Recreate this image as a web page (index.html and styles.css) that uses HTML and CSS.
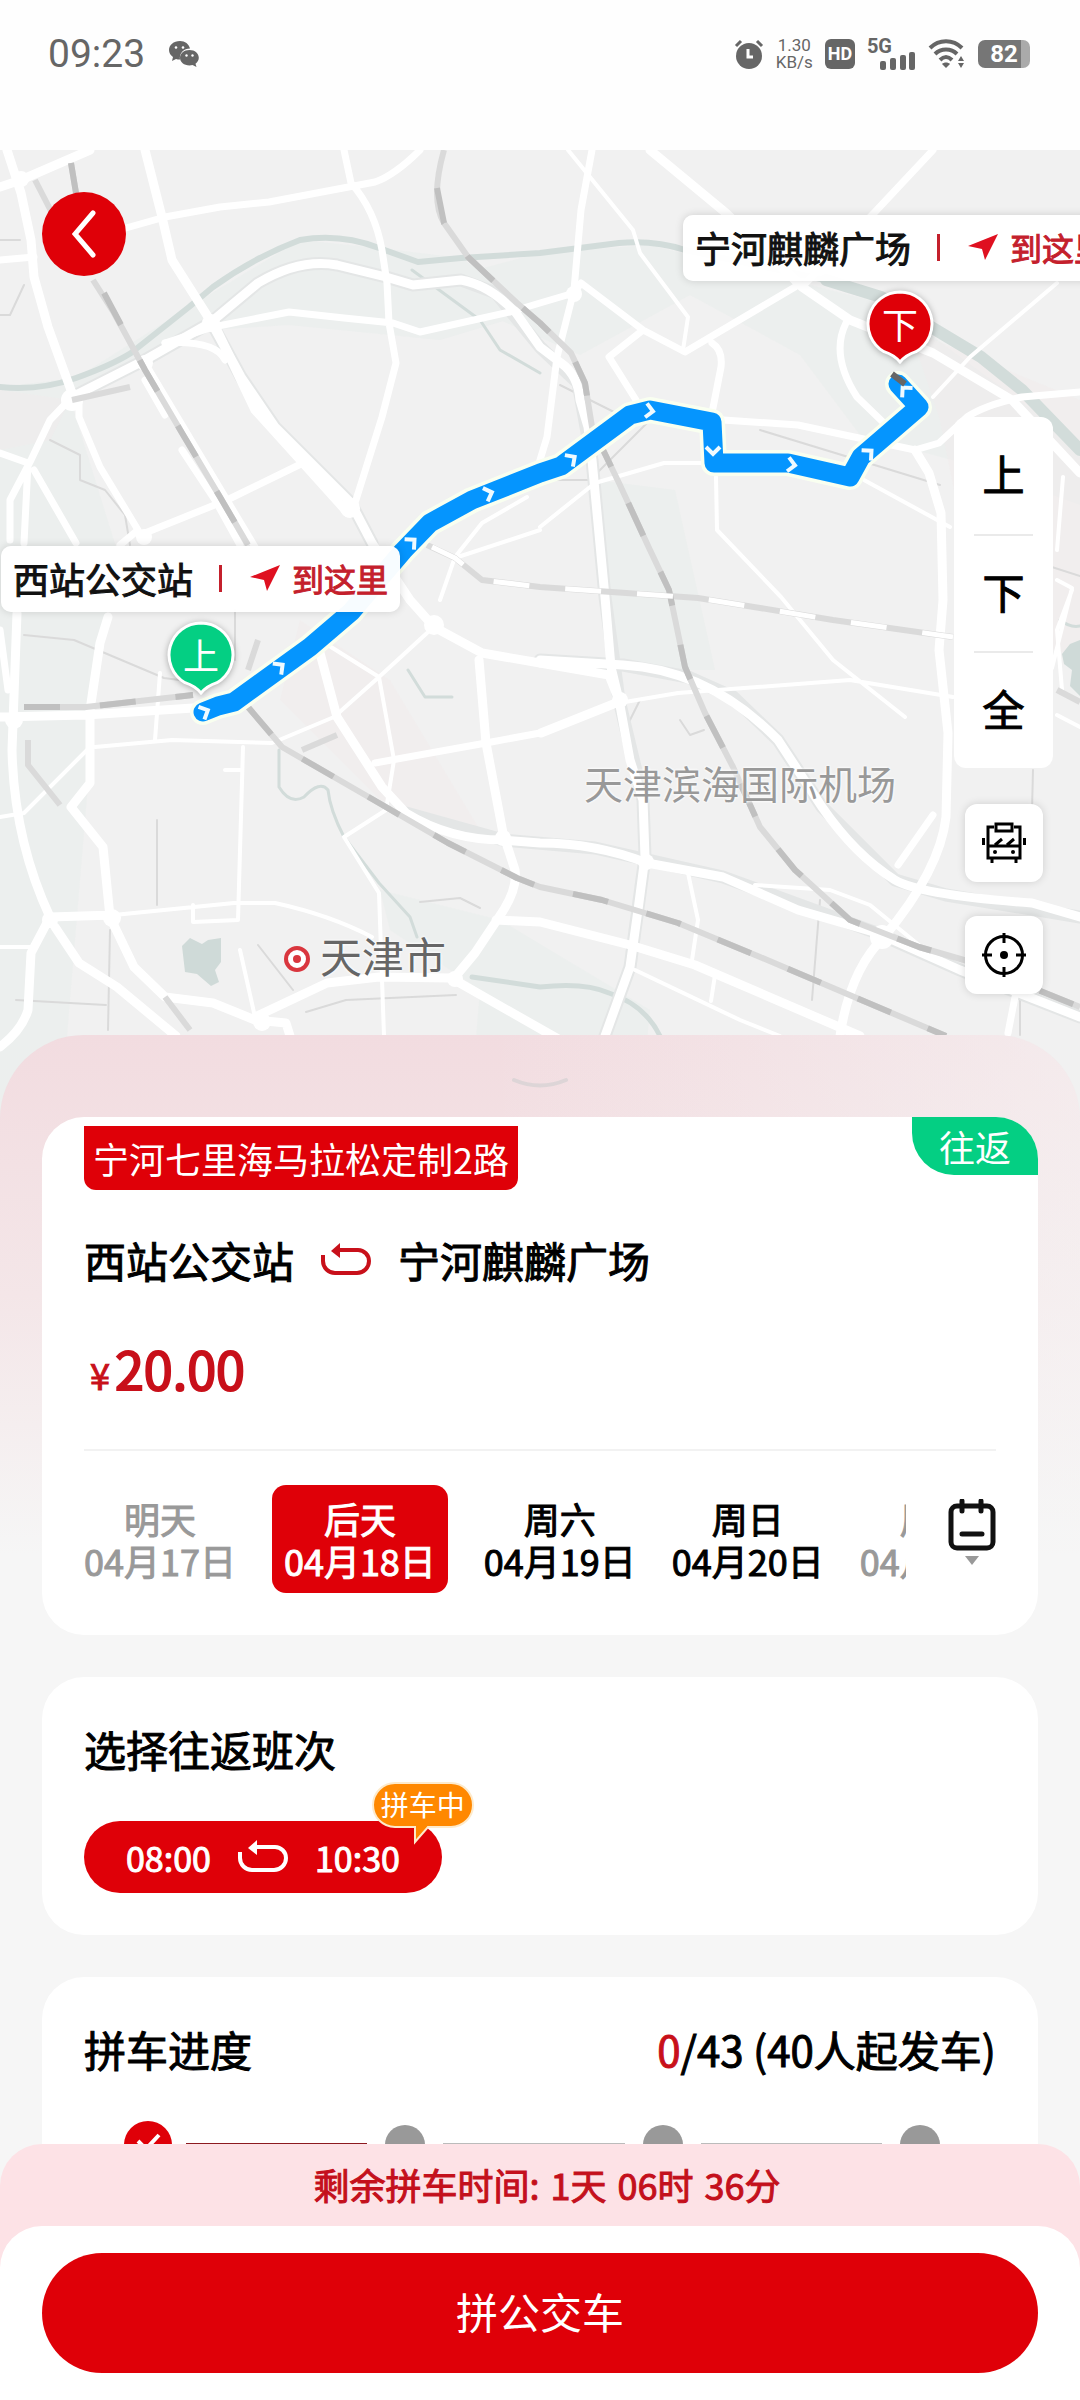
FILE: index.html
```html
<!DOCTYPE html>
<html lang="zh-CN">
<head>
<meta charset="utf-8">
<meta name="viewport" content="width=device-width, initial-scale=1">
<title>宁河七里海马拉松定制2路</title>
<link rel="stylesheet" href="styles.css">
</head>
<body>
<svg class="defs" width="0" height="0" aria-hidden="true">
  <symbol id="loop" viewBox="0 0 52 34">
    <path d="M3 12v6a12 12 0 0 0 12 12h22a12 12 0 0 0 12-12v0a11 11 0 0 0-11-11H18" fill="none" stroke="currentColor" stroke-width="4"/>
    <path d="M11 8L20 0v15z" fill="currentColor"/>
  </symbol>
  <symbol id="nav" viewBox="0 0 30 26">
    <path d="M0 12L30 0 17 26 14 15z" fill="currentColor"/>
  </symbol>
</svg>
<div class="app">
  <header class="status">
    <div class="status-side">
      <time class="clock">09:23</time>
      <svg width="30" height="26" viewBox="0 0 30 26" fill="#666">
        <path d="M11 0C4.500 0 0 4 0 9c0 3 1.500 5 4 7l-1 4 4-2c1 .4 2.500.6 4 .6C10 12 15 7.500 21 7.500 20 3 16 0 11 0z"/>
        <path d="M20.500 9C15 9 11 12.500 11 16.800s4 7.700 9.500 7.700c1 0 2-.1 3-.4l4 1.900-1-3.200c2-1.500 3.300-3.600 3.300-6C29.800 12.500 26 9 20.500 9z"/>
        <g fill="#fff"><circle cx="7" cy="6.500" r="1.300"/><circle cx="14" cy="6.500" r="1.300"/><circle cx="17.500" cy="14.500" r="1.200"/><circle cx="23.500" cy="14.500" r="1.200"/></g>
      </svg>
    </div>
    <div class="status-side status-right">
      <svg width="30" height="30" viewBox="0 0 30 30">
        <circle cx="15" cy="17" r="13" fill="#666"/>
        <path d="M2 7l5-5M28 7l-5-5" stroke="#666" stroke-width="3"/>
        <path d="M14 10v8h5" fill="none" stroke="#fff" stroke-width="3"/>
      </svg>
      <span class="rate">1.30<br>KB/s</span>
      <span class="hd">HD</span>
      <span class="signal"><b>5G</b>
        <svg width="36" height="18" viewBox="0 0 36 18" fill="#666"><rect y="9" width="6" height="9" rx="2"/><rect x="10" y="6" width="6" height="12" rx="2"/><rect x="20" y="3" width="6" height="15" rx="2"/><rect x="29" width="6" height="18" rx="2"/></svg>
      </span>
      <svg width="38" height="30" viewBox="0 0 38 30" fill="none" stroke="#666" stroke-width="4">
        <path d="M2 9C11 0 25 0 34 9M7 15c6-6 16-6 22 0M12 21c4-4 8-4 12 0"/>
        <path d="M18 29l-4-4c2-2 6-2 8 0zM33 17l3 5h-6zM33 29l3-5h-6z" fill="#666" stroke="none"/>
      </svg>
      <span class="battery">82</span>
    </div>
  </header>

  <main class="content">
    <section class="map" aria-label="线路地图">
      <svg class="map-art" viewBox="0 150 1080 970" preserveAspectRatio="xMidYMin slice" fill="none" stroke-linejoin="round" stroke-linecap="round">
        <rect y="150" width="1080" height="970" fill="#f1f1f1"/>
        <path d="M0 387L76 378 189 307 300 240 379 248 461 258 540 310 440 340 289 325 210 330 145 365 72 405 120 560 100 640 60 1120H0zM540 253l110-8 240 60 190 140v60l-110-40-110-30-60-80-110-60-110 60-160-70zM595 480l80 10 40 180-100 0zM380 890l120 30 150 90-10 100H470l10-120-90-60z" fill="#eaeeed" fill-opacity=".7"/>
        <path d="M910 330l170 70v260l-100-40-40-200zM0 390l70 10-20 40-50 10zM300 620l90 60 90 150-100-30-100-100z" fill="#f2ebeb" fill-opacity=".45"/>
        <!-- rivers -->
        <g stroke="#d2dcda">
          <path stroke-width="6" d="M0 387Q40 391 76 378T131 353L189 307 213 287Q255 257 300 240 340 233 379 248L418 262 461 258 540 253 619 243Q655 240 685 250L826 280"/>
          <path stroke-width="12" d="M826 280L881 297 936 330 981 357 1022 390 1080 450"/>
          <path stroke-width="3" d="M279 750V787Q290 805 304 797 320 780 328 790 330 810 344 837L379 883 410 917 417 937M412 270L480 320 500 350 540 373"/>
          <path stroke-width="5" d="M472 977L540 987Q585 982 609 993 645 1005 660 1036"/>
          <path stroke-width="3" d="M408 670L425 697 452 697M1060 620q10 8 20 6"/>
        </g>
        <path d="M182 946l8-8 12 6 6-4 13-2v24l-6 8 4 12-8 4-14-12-12-2zM1062 654l8-10 10-4v56l-10-10 2-16-8-6z" fill="#cfdad8"/>
        <!-- small lanes -->
        <g stroke="#dadada" stroke-width="2">
          <path d="M24 285l-14 30-10 0M50 440l30 15v25l25 10 20 25 5 30M24 635l50 5 90 38 30 4M157 820v85M110 930l-2 100M16 1000l90 5M420 902l40-4 20 10M306 1012l40-12 110-5M258 945l35 45M560 385l60 30M760 430l180 55M820 900l-8 100M1033 770l-2 80M235 610v50M640 700l-15 30M680 720l10 15 14-5M1030 560l50 16M0 240h20M1020 950v85"/>
          <path d="M540 480l50 0 60-60M1012 640l-30 8"/>
        </g>
        <!-- soft edge under the main roads -->
        <g stroke="#e4e6e6" stroke-width="13">
          <path d="M210 320L241 377 275 427 351 503 372 543M72 397L145 360 210 323 258 283Q300 258 337 265L386 277 413 285 461 280 496 293 540 347 578 383 592 460 605 597 619 700 643 800 645 857 630 967 605 1036M406 813L503 840 595 848 723 877 877 933 960 970 1080 1017M540 660L623 665 688 677 733 697 778 740 822 807 895 880 946 895 1080 917"/>
        </g>
        <g stroke="#fff" stroke-width="9">
          <path d="M0 187L21 180 90 150M7 150L21 193 31 240 34 277 48 327 72 393M145 150L162 217 172 260 210 320 241 377 275 427 351 503 372 543 410 600 434 627 482 653 540 663"/>
          <path d="M217 330L255 410 303 463 348 513M72 397L145 360 210 323 258 283Q300 258 337 265L386 277 413 285 461 280Q490 285 516 313L540 347 561 363Q578 375 580 400L588 427 592 460 605 597 611 667 619 700 630 760 643 800 645 857 638 910 630 967 605 1036"/>
          <path d="M0 717L86 715 193 708M17 613L12 750Q14 840 50 917L31 953 28 1010Q22 1030 0 1047M108 617L100 643 90 710V783L71 807 103 847 110 917 134 967 165 997 213 1003 255 1020 286 1023 290 1036M50 917L114 915M55 927L79 963 117 987 176 1036"/>
          <path d="M255 1017L327 983 379 977 451 978 560 1040M455 977L475 953 499 917Q518 890 515 870L503 833 486 743 479 660M496 920L540 922 630 945 695 965 860 1036"/>
          <path d="M320 653L337 717 382 787 406 813Q450 840 503 840L540 843Q595 843 647 863L723 877 798 910 877 933 960 970 1080 1017M540 660L623 665Q710 670 778 740L822 807Q855 855 895 880 920 895 1032 903L1080 917M540 663L609 675 619 700"/>
          <path d="M915 450L929 473 941 513 943 600 939 650 948 733 946 817Q940 870 884 937 850 970 840 1036M541 733L616 703M650 150L726 213 802 287 850 320 933 353 1012 400 1080 473"/>
        </g>
        <g stroke="#fff" stroke-width="7">
          <path d="M126 228L165 217 220 207 269 202 375 182Q395 175 420 150M344 150L351 183Q375 210 382 250L387 283 389 323 396 363 382 417 355 503M165 343L213 327 289 312 344 318 393 323 420 332 510 312 540 303 574 293M592 150L581 210 574 290 557 357 547 437 540 460"/>
          <path d="M574 293L581 283 643 330 685 352 795 287M933 150L874 213 802 287M846 323Q830 355 857 397L888 427M712 343Q723 350 721 367L712 413M643 330L609 357 636 400M723 420L798 425 915 450 939 443 967 417Q985 405 1022 397L1080 392"/>
          <path d="M79 397L79 417 100 467 138 530 120 545M145 533L227 500 303 463M145 363L203 460 255 547M72 397L50 420 31 460 10 500V540M0 453L28 463 24 543M34 470L76 543M0 260L34 257M165 343Q215 340 225 360M0 630L8 690M375 763L486 743 540 733"/>
          <path d="M145 380L165 415M182 450L215 500 240 545M898 865l35-50M1015 997l-7 36"/>
        </g>
        <g stroke="#fff" stroke-width="4">
          <path d="M568 150L633 230 640 253 688 317 683 350M540 527L595 483 664 463 705 463M716 477L717 530 781 597 833 660 905 717M864 480L950 527M1057 283L970 357 933 397M619 703L678 693 850 680 953 697M440 600L455 557 482 523 527 497M458 557L540 530"/>
          <path d="M95 747L172 740 272 743 334 717 379 677 427 633M331 647L379 677 394 760 386 810 344 837 379 893 384 1036M114 915L234 903 275 903Q330 915 372 937M243 747L238 920 193 922V905M225 770h15M160 673L155 740M90 747L24 813 0 817M688 873L698 920 692 960M240 950L255 1017M755 885L830 890 870 905 925 950M635 970L740 1020 780 1036M1063 477L1057 550M1057 580l15 8-20 80M1062 690l-5-60 15-40M0 947H31M715 975l-4 26M1057 715l23 12"/>
        </g>
        <g fill="#fff"><circle cx="21" cy="179" r="8"/><circle cx="211" cy="323" r="9"/><circle cx="72" cy="400" r="11"/><circle cx="350" cy="508" r="10"/><circle cx="574" cy="294" r="8"/><circle cx="145" cy="363" r="8"/><circle cx="434" cy="625" r="10"/><circle cx="14" cy="720" r="9"/><circle cx="50" cy="920" r="8"/><circle cx="112" cy="918" r="9"/><circle cx="646" cy="862" r="8"/><circle cx="882" cy="937" r="12"/><circle cx="455" cy="979" r="8"/><circle cx="620" cy="700" r="8"/><circle cx="262" cy="1022" r="9"/><circle cx="144" cy="537" r="8"/><circle cx="503" cy="838" r="8"/></g>
        <!-- railways -->
        <g stroke-linecap="butt" stroke-width="6">
          <g stroke="#dadada">
            <path d="M444 150Q430 200 444 223L468 257 517 303 540 323 571 353 585 383 592 427 619 483 650 550 669 590 685 667 705 713 733 767 760 827 795 870 850 920 919 947 964 960 1080 1007"/>
            <path d="M248 707L282 747 379 803 448 843 517 878 540 887 602 900 678 923 760 957 946 1036"/>
            <path d="M24 707L86 707 193 695M71 163L76 193M93 280L114 313 145 370 182 433 220 497 248 545M35 180L52 213M72 400L130 387M28 740V765L60 805M165 997L190 1030M258 640L248 670M337 735l-35 15"/>
            <path d="M427 545L455 558 482 580 540 587 698 598 760 608 833 620 953 637M1057 690L1080 702"/>
          </g>
          <g stroke="#c0c0c0" stroke-dasharray="36 40">
            <path d="M437 188L444 223 468 257 517 303 540 323 571 353 585 383 592 427 619 483 650 550 669 590 685 667 705 713 733 767 760 827 795 870 850 920 919 947 964 960 1080 1007"/>
            <path d="M248 707L282 747 379 803 448 843 517 878 540 887 602 900 678 923 760 957 946 1036"/>
            <path d="M24 707L86 707 193 695M71 163L76 193M104 293L145 370 182 433 220 497 248 545"/>
          </g>
          <path stroke="#fff" stroke-dasharray="36 36" stroke-width="5" d="M432 547L455 558 482 580 540 587 698 598 760 608 833 620 953 637"/>
        </g>
        <!-- bus route -->
        <g>
          <path stroke="#f9fff0" stroke-width="26" d="M203 712L218 706 234 702 310 647 351 612 403 551 430 523 472 500 540 473 561 466 630 415 650 410 712 422 714 463 788 463 850 477 861 457 919 407 898 384"/>
          <path stroke="#0595fe" stroke-width="19" d="M203 712L218 706 234 702 310 647 351 612 403 551 430 523 472 500 540 473 561 466 630 415 650 410 712 422 714 463 788 463 850 477 861 457 919 407 898 384"/>
          <g stroke="#effaff" stroke-width="4" stroke-linecap="butt" stroke-linejoin="miter">
            <path transform="translate(281 666) rotate(-37)" d="M-5-7L2 0-5 7"/>
            <path transform="translate(413 541) rotate(-42)" d="M-5-7L2 0-5 7"/>
            <path transform="translate(490 493) rotate(-20)" d="M-5-7L2 0-5 7"/>
            <path transform="translate(573 458) rotate(-35)" d="M-5-7L2 0-5 7"/>
            <path transform="translate(651 411) rotate(8)" d="M-5-7L2 0-5 7"/>
            <path transform="translate(713 452) rotate(90)" d="M-5-7L2 0-5 7"/>
            <path transform="translate(793 465) rotate(8)" d="M-5-7L2 0-5 7"/>
            <path transform="translate(870 452) rotate(-42)" d="M-5-7L2 0-5 7"/>
            <path transform="translate(904 389) rotate(-132)" d="M-5-7L2 0-5 7"/>
            <path transform="translate(206 711) rotate(-25)" d="M-5-7L2 0-5 7"/>
          </g>
          <path stroke="#666" stroke-width="6" stroke-linecap="butt" d="M892 374l13 10"/>
        </g>
        <circle cx="297" cy="959" r="11" stroke="#d9363e" stroke-width="4" fill="#fff"/>
        <circle cx="297" cy="959" r="4" fill="#d9363e"/>
      </svg>

      <span class="place place-city">天津市</span>
      <span class="place place-airport">天津滨海国际机场</span>

      <div class="pin pin-start">
        <svg viewBox="0 0 68 74" width="68" height="74"><path d="M34 2a32 32 0 0 1 16 59.700Q40 65 34 72 28 65 18 61.700A32 32 0 0 1 34 2z" fill="#04cf83" stroke="#fff" stroke-width="3"/></svg>
        <span>上</span>
      </div>
      <div class="pin pin-end">
        <svg viewBox="0 0 68 74" width="68" height="74"><path d="M34 2a32 32 0 0 1 16 59.700Q40 65 34 72 28 65 18 61.700A32 32 0 0 1 34 2z" fill="#df0008" stroke="#fff" stroke-width="3"/></svg>
        <span>下</span>
      </div>

      <div class="callout callout-start">
        <strong>西站公交站</strong><i></i>
        <a href="#"><svg width="30" height="26"><use href="#nav"/></svg>到这里</a>
      </div>
      <div class="callout callout-end">
        <strong>宁河麒麟广场</strong><i></i>
        <a href="#"><svg width="30" height="26"><use href="#nav"/></svg>到这里</a>
      </div>

      <button class="back" type="button" aria-label="返回">
        <svg width="24" height="48" viewBox="0 0 24 48" fill="none" stroke="#fff" stroke-width="5" stroke-linecap="round"><path d="M21 3L3 24l18 21"/></svg>
      </button>

      <div class="controls">
        <div class="stops">
          <button type="button">上</button>
          <button type="button">下</button>
          <button type="button">全</button>
        </div>
        <button class="tool" type="button" aria-label="车辆">
          <svg width="44" height="42" viewBox="0 0 44 42" fill="none" stroke="#000" stroke-width="3">
            <path d="M12 5H6v31h32V5h-6M14 2h16v7H14zM6 24h32M10 36v5M34 36v5M13 23l7-6M25 23l7-6"/>
            <path d="M1.500 16v7M42.500 16v7"/><g fill="#000" stroke="none"><circle cx="13" cy="30" r="2"/><circle cx="31" cy="30" r="2"/></g>
          </svg>
        </button>
        <button class="tool" type="button" aria-label="定位">
          <svg width="44" height="44" viewBox="0 0 44 44" fill="none" stroke="#000" stroke-width="3">
            <circle cx="22" cy="22" r="18.500"/><path d="M22 0v10M22 34v10M0 22h10M34 22h10"/><circle cx="22" cy="22" r="4" fill="#000" stroke="none"/>
          </svg>
        </button>
      </div>
    </section>

    <section class="sheet">
      <div class="handle"><svg width="58" height="12" viewBox="0 0 58 12"><path d="M3 3Q29 14 55 3" fill="none" stroke="#ddd5d7" stroke-width="4" stroke-linecap="round"/></svg></div>

      <article class="card card-route">
        <span class="line-name">宁河七里海马拉松定制2路</span>
        <span class="trip-type">往返</span>
        <h1 class="stations">西站公交站<svg width="52" height="34"><use href="#loop"/></svg>宁河麒麟广场</h1>
        <p class="price"><small>¥</small>20.00</p>
        <div class="calendar">
          <div class="dates">
            <button class="date off" type="button">明天<br>04月17日</button>
            <button class="date on" type="button">后天<br>04月18日</button>
            <button class="date" type="button">周六<br>04月19日</button>
            <button class="date" type="button">周日<br>04月20日</button>
            <button class="date off" type="button">周一<br>04月21日</button>
          </div>
          <button class="more" type="button" aria-label="日历">
            <svg width="48" height="68" viewBox="0 0 48 68" fill="none" stroke="#111" stroke-width="5" stroke-linecap="round">
              <rect x="3" y="7" width="42" height="42" rx="6"/><path d="M14 2v10M33 2v10M14 35h20"/>
              <path d="M17 57h14l-7 9z" fill="#999" stroke="none"/>
            </svg>
          </button>
        </div>
      </article>

      <article class="card">
        <h2>选择往返班次</h2>
        <button class="shift" type="button">08:00<svg width="52" height="34"><use href="#loop"/></svg>10:30
          <span class="badge"><svg width="106" height="64" viewBox="0 0 106 64"><path d="M25 2h56a22 22 0 0 1 0 44H58L45 61V46H25a22 22 0 0 1 0-44z" fill="#ff8800" stroke="#fdeacb" stroke-width="2"/></svg><em>拼车中</em></span>
        </button>
      </article>

      <article class="card">
        <div class="progress-head"><h2>拼车进度</h2><p><b>0</b>/43 (40人起发车)</p></div>
        <ol class="steps">
          <li class="done"><svg width="48" height="48" viewBox="0 0 48 48"><circle cx="24" cy="24" r="24" fill="#df0008"/><path d="M14 20l8 8 13-14" fill="none" stroke="#fff" stroke-width="4"/></svg></li>
          <li></li>
          <li></li>
          <li></li>
        </ol>
      </article>
    </section>
  </main>

  <footer class="footer">
    <p class="remain">剩余拼车时间: <span>1天</span> <span>06时</span> <span>36分</span></p>
    <div class="action"><button class="submit" type="button">拼公交车</button></div>
  </footer>
</div>
</body>
</html>
```
FILE: styles.css
```css
* { box-sizing: border-box; margin: 0; padding: 0; }
body {
  font-family: "Noto Sans CJK SC", "Noto Sans", sans-serif;
  color: #000;
  background: #f6f6f6;
}
button { border: 0; background: none; font: inherit; color: inherit; cursor: pointer; }
a { color: inherit; text-decoration: none; }
svg { display: block; flex: none; }
.defs { position: absolute; }

/* emphasised text: regular letterforms with a slightly heavier stroke */
.callout, .stops, .stations, .price, .date, .shift, .card h2, .progress-head p, .remain {
  font-weight: 400;
  -webkit-text-stroke: 1px currentColor;
}

.app { display: flex; flex-direction: column; height: 100vh; overflow: hidden; }

/* status bar */
.status {
  flex: none;
  display: flex;
  justify-content: space-between;
  height: 150px;
  padding: 34px 50px 76px 48px;
  background: #fefefe;
  color: #666;
  font-family: Roboto, sans-serif;
}
.status-side { display: flex; align-items: center; gap: 24px; }
.status-right { gap: 12px; }
.clock { font-size: 39px; line-height: 40px; }
.rate { font-size: 17px; line-height: 17px; text-align: center; }
.hd {
  width: 30px; border-radius: 6px;
  background: #666; color: #fff;
  font-size: 18px; line-height: 30px; font-weight: 700; text-align: center;
}
.signal { display: flex; align-items: flex-end; height: 32px; }
.signal b { align-self: flex-start; font-size: 20px; line-height: 16px; margin-right: -12px; }
.battery {
  width: 52px; padding: 0 6px; border-radius: 7px;
  background: linear-gradient(to right, #767676 82%, #aaa 82%);
  color: #fff;
  font-size: 24px; line-height: 28px; font-weight: 700; text-align: center;
}

.content { flex: 1; min-height: 0; overflow-y: auto; scrollbar-width: none; }

/* map */
.map { position: relative; height: 970px; overflow: hidden; }
.map-art { width: 100%; height: 100%; }
.place { position: absolute; white-space: nowrap; text-shadow: 0 0 3px #fff, 0 0 3px #fff; }
.place-city { left: 320px; top: 775px; font-size: 42px; line-height: 60px; color: #666; }
.place-airport { left: 584px; top: 602px; font-size: 39px; line-height: 60px; color: #999; }
.pin { position: absolute; width: 68px; height: 74px; color: #fff; text-align: center; }
.pin svg { position: absolute; inset: 0; filter: drop-shadow(0 1px 3px rgba(0, 0, 0, .3)); }
.pin span { position: relative; font-size: 36px; line-height: 66px; }
.pin-start { left: 167px; top: 471px; }
.pin-end { left: 866px; top: 140px; }
.callout {
  position: absolute;
  display: flex; align-items: center;
  height: 66px; padding: 0 12px 2px;
  border-radius: 10px;
  background: rgba(255, 255, 255, .97);
  box-shadow: 0 0 8px rgba(0, 0, 0, .14);
  white-space: nowrap;
  color: #111;
}
.callout strong { font-size: 36px; font-weight: inherit; }
.callout i { width: 3px; height: 27px; margin: 0 28px 0 26px; background: #c4202c; }
.callout a { display: flex; align-items: center; gap: 12px; font-size: 32px; color: #c4202c; }
.callout svg { color: #df1020; }
.callout-start { left: 1px; top: 396px; }
.callout-end { left: 683px; top: 65px; }
.back {
  position: absolute; left: 42px; top: 42px;
  display: flex; align-items: center; justify-content: center;
  width: 84px; height: 84px; border-radius: 50%;
  background: #df0008;
}
.controls {
  position: absolute; right: 27px; top: 267px;
  display: flex; flex-direction: column; align-items: center;
  gap: 34px;
}
.stops { width: 99px; padding: 0 20px; border-radius: 12px; background: #fff; margin-bottom: 2px; }
.stops button { display: block; width: 100%; height: 117px; padding-bottom: 6px; font-size: 42px; line-height: 106px; }
.stops button + button { border-top: 2px solid #eaeaea; }
.tool {
  display: flex; align-items: center; justify-content: center;
  width: 78px; height: 78px; border-radius: 12px;
  background: #fff; box-shadow: 0 0 8px rgba(0, 0, 0, .14);
}

/* bottom sheet */
.sheet {
  position: relative;
  display: flex; flex-direction: column; gap: 42px;
  margin-top: -85px; padding: 0 42px 42px;
  border-radius: 84px 84px 0 0;
  background:
    linear-gradient(to right, rgba(246, 246, 246, 0) 45%, rgba(246, 246, 246, .55)),
    linear-gradient(to bottom, #f2dce0, #f4e6e8 260px, #f6f6f6 520px);
}
.handle { display: flex; justify-content: center; height: 82px; padding-top: 42px; margin-bottom: -42px; }
.card { padding: 42px; border-radius: 42px; background: #fff; }
.card h2, .progress-head p { font-size: 42px; line-height: 60px; }

.card-route { position: relative; padding-top: 9px; overflow: hidden; }
.line-name {
  display: inline-block; vertical-align: top;
  padding: 0 9px; border-radius: 0 0 12px 12px;
  background: #df0008; color: #fff;
  font-size: 36px; line-height: 64px;
}
.trip-type {
  position: absolute; right: 0; top: 0;
  padding: 0 27px; border-radius: 0 0 0 42px;
  background: #04cf83; color: #fff;
  font-size: 36px; line-height: 58px;
}
.stations {
  display: flex; align-items: center; gap: 26px;
  margin-top: 40px;
  font-size: 42px; line-height: 60px;
}
.stations svg { color: #c8101a; }
.price {
  margin-top: 48px; padding: 0 0 45px 6px;
  border-bottom: 2px solid #f2f2f2;
  color: #c8101a; font-size: 52px; line-height: 60px;
  -webkit-text-stroke-width: 2px;
}
.price small { margin-right: 5px; font-size: 36px; -webkit-text-stroke-width: 1px; }
.calendar { display: flex; justify-content: space-between; margin-top: 34px; }
.dates { display: flex; gap: 36px; flex: 1; overflow-x: auto; scrollbar-width: none; margin-right: 42px; }
.date {
  flex: none; padding: 12px 0;
  font-size: 36px; line-height: 42px; white-space: nowrap;
}
.date.off { color: #999; }
.date.on { padding: 12px; border-radius: 14px; background: #df0008; color: #fff; }
.more { display: flex; padding-top: 14px; }

.shift {
  position: relative;
  display: flex; align-items: center; gap: 26px;
  height: 72px; margin-top: 42px; padding: 0 42px;
  border-radius: 36px;
  background: #df0008; color: #fff;
  font-size: 34px;
}
.badge { position: absolute; right: -34px; top: -40px; width: 106px; height: 64px; -webkit-text-stroke-width: 0; }
.badge svg { position: absolute; inset: 0; }
.badge em { position: relative; display: block; font-size: 28px; font-style: normal; line-height: 46px; text-align: center; }

.progress-head { display: flex; justify-content: space-between; }
.progress-head b { font-weight: inherit; color: #c8101a; }
.steps { display: flex; list-style: none; padding: 0 52px 0 40px; margin-top: 42px; }
.steps li { display: flex; align-items: center; height: 48px; flex: 1; }
.steps li:not(.done)::before { content: ""; width: 40px; height: 40px; margin: 0 4px; border-radius: 50%; background: #999; flex: none; }
.steps li:not(:last-child)::after { content: ""; flex: 1; height: 4px; margin: 0 14px; background: #bbb; }
.steps li.done::after { background: #8c1a20; }
.steps li:last-child { flex: none; }

/* footer */
.footer { flex: none; border-radius: 42px 42px 0 0; background: #fde2e6; }
.remain {
  padding: 10px 0 12px 14px;
  color: #c4101c; font-size: 36px; line-height: 60px; text-align: center;
}
.remain span { margin-left: 3px; }
.action { padding: 27px 42px; border-radius: 42px 42px 0 0; background: #fff; }
.submit {
  width: 100%; height: 120px; padding-bottom: 6px; border-radius: 60px;
  background: #df0008; color: #fff;
  font-size: 42px;
}
```
